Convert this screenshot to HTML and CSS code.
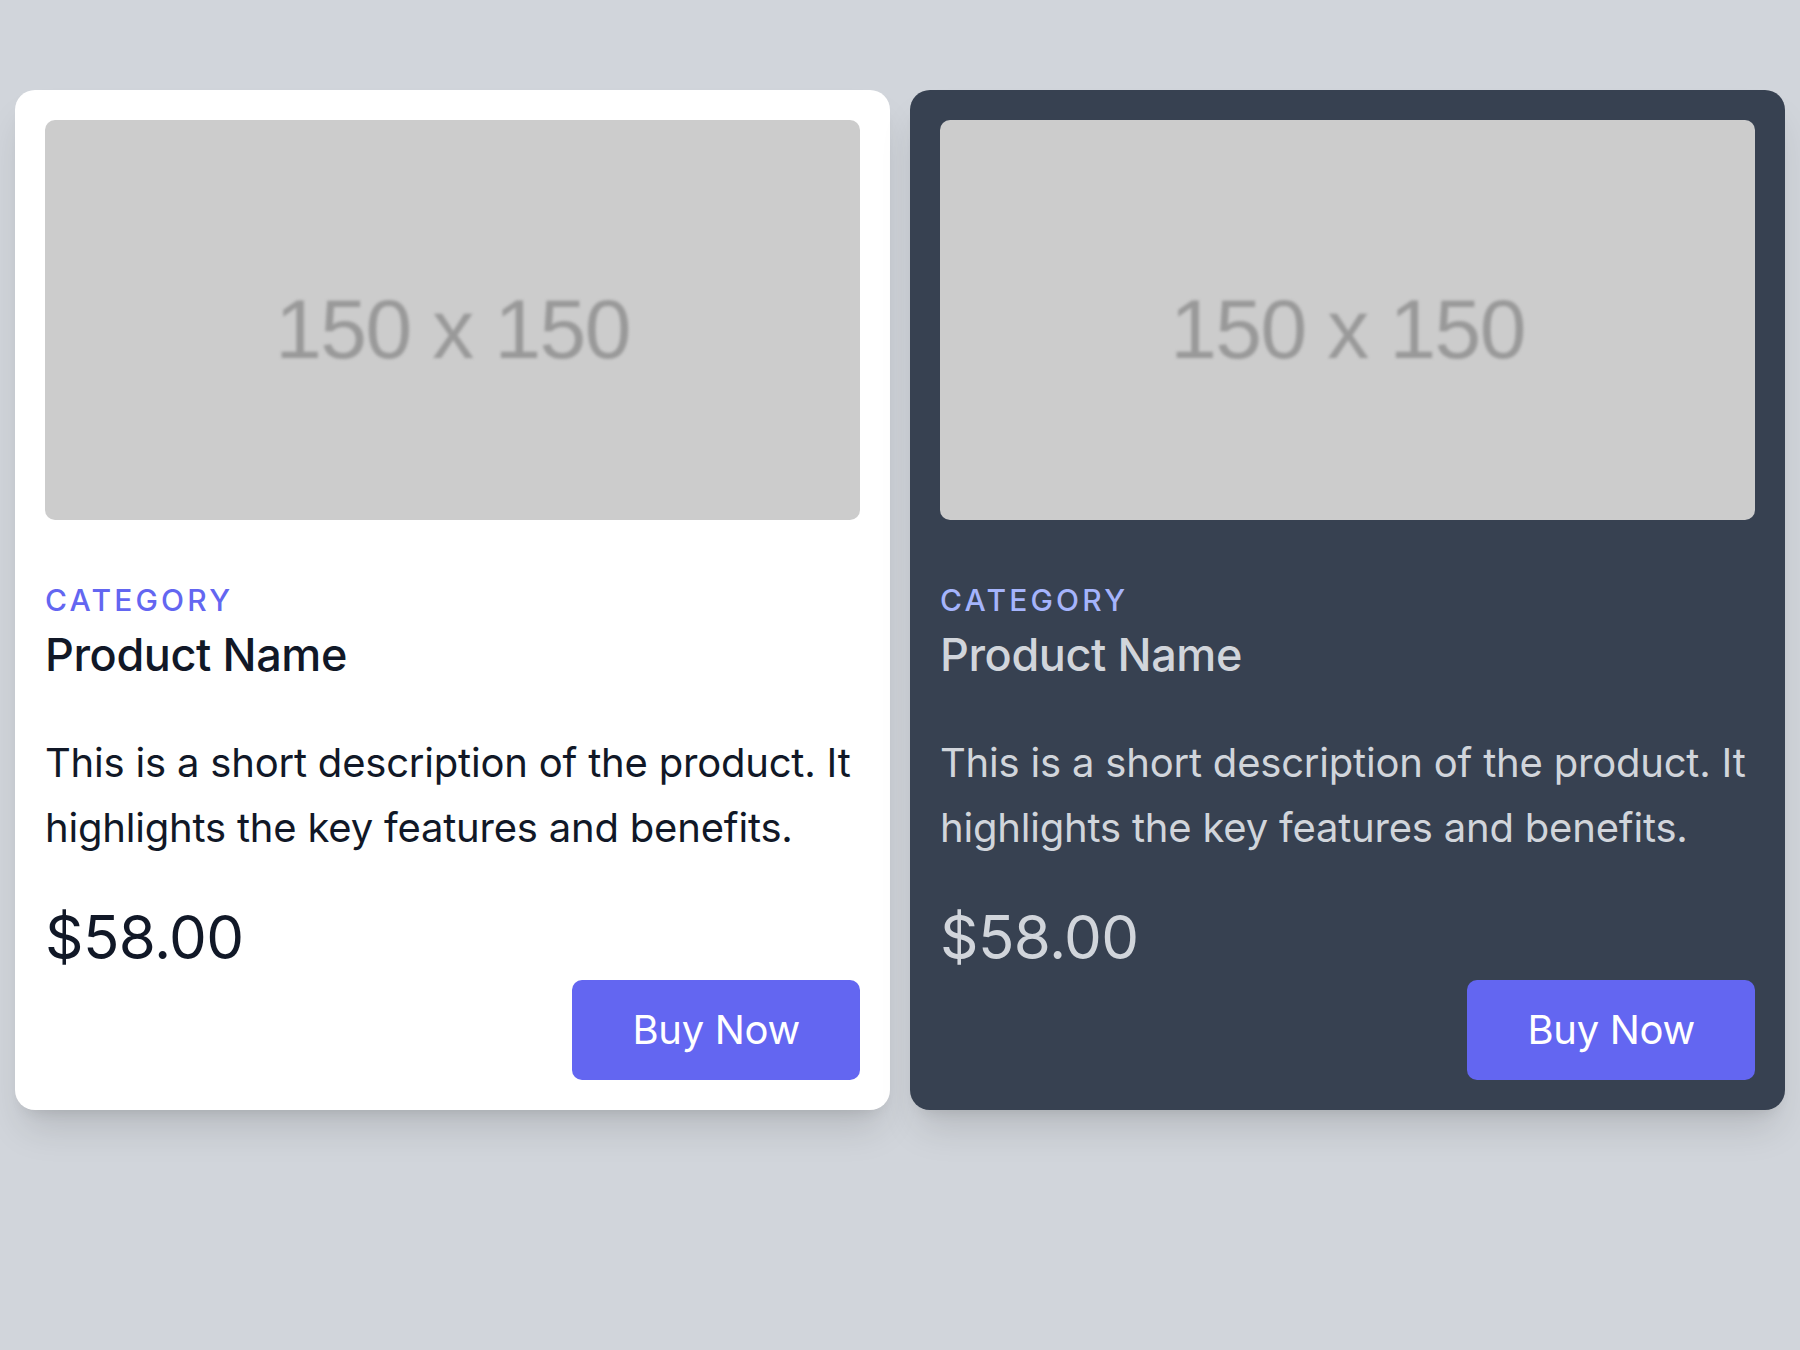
FILE: index.html
```html
<!DOCTYPE html>
<html lang="en">
<head>
<meta charset="utf-8">
<title>Product Cards</title>
<link rel="stylesheet" href="styles.css">
</head>
<body>
<main class="grid">
  <article class="card card-light">
    <div class="thumb"><span class="thumb-text">150 x 150</span></div>
    <p class="category">Category</p>
    <h2 class="name">Product Name</h2>
    <p class="desc">This is a short description of the product. It highlights the key features and benefits.</p>
    <p class="price">$58.00</p>
    <button class="buy">Buy Now</button>
  </article>
  <article class="card card-dark">
    <div class="thumb"><span class="thumb-text">150 x 150</span></div>
    <p class="category">Category</p>
    <h2 class="name">Product Name</h2>
    <p class="desc">This is a short description of the product. It highlights the key features and benefits.</p>
    <p class="price">$58.00</p>
    <button class="buy">Buy Now</button>
  </article>
</main>
</body>
</html>
```
FILE: styles.css
```css
* { box-sizing: border-box; }
html, body { margin: 0; padding: 0; }
body {
  background: #d1d5db;
  font-family: Inter, "Noto Sans", sans-serif;
  width: 1800px;
  height: 1350px;
}
.grid {
  display: grid;
  grid-template-columns: 1fr 1fr;
  gap: 20px;
  padding: 90px 15px 0;
  align-items: start;
}
.card {
  display: flex;
  flex-direction: column;
  padding: 30px;
  border-radius: 20px;
  box-shadow: 0 25px 38px -8px rgba(0,0,0,0.13), 0 10px 15px -10px rgba(0,0,0,0.12);
}
.card-light { background: #ffffff; }
.card-dark { background: #374151; }
.thumb {
  height: 400px;
  background: #cccccc;
  border-radius: 10px;
  display: flex;
  align-items: center;
  justify-content: center;
  padding-top: 17px;
  overflow: hidden;
}
.thumb-text {
  font-family: "Liberation Sans", Arial, sans-serif;
  font-size: 84px;
  letter-spacing: -1.6px;
  color: #999999;
  filter: blur(1.4px);
  line-height: 1;
}
.category {
  margin: 60px 0 0;
  font-size: 30px;
  line-height: 40px;
  font-weight: 500;
  letter-spacing: 3.2px;
  text-transform: uppercase;
  color: #6366f1;
}
.name {
  margin: 0;
  font-size: 45px;
  line-height: 70px;
  font-weight: 500;
  letter-spacing: -0.4px;
  color: #111827;
}
.desc {
  margin: 40px 0 0;
  font-size: 40px;
  line-height: 65px;
  letter-spacing: -0.2px;
  color: #111827;
}
.price {
  margin: 37px 0 0;
  font-size: 60px;
  line-height: 80px;
  font-weight: 400;
  letter-spacing: -0.6px;
  color: #111827;
}
.buy {
  align-self: flex-end;
  margin-top: 3px;
  border: 0;
  border-radius: 10px;
  background: #6366f1;
  color: #ffffff;
  font-family: Inter, "Noto Sans", sans-serif;
  font-size: 40px;
  line-height: 60px;
  letter-spacing: -0.3px;
  padding: 20px 60px;
  cursor: pointer;
}
.card-dark .category { color: #a5b4fc; }
.card-dark .name,
.card-dark .desc,
.card-dark .price { color: #d1d5db; }
```
